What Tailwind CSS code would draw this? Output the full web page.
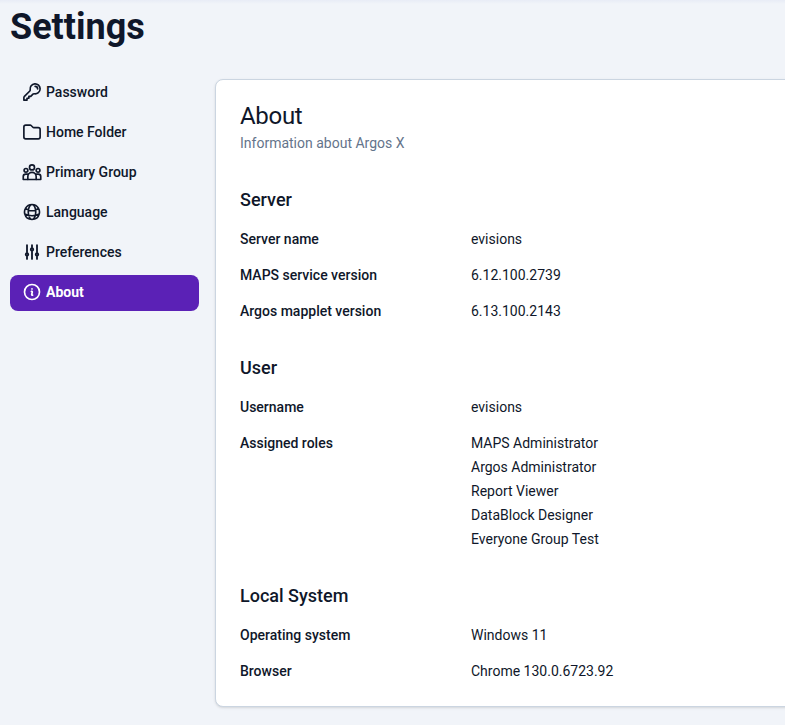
<!DOCTYPE html>
<html lang="en">
<head>
  <meta charset="UTF-8" />
  <title>Settings</title>
  <script src="https://cdn.jsdelivr.net/npm/@tailwindcss/browser@4"></script>
</head>
<body class="h-[725px] overflow-hidden bg-[#f1f4f9] text-[#0f172a] font-['Roboto',sans-serif]">
  <!-- faint shadow from the bar above the page -->
  <div class="absolute top-0 inset-x-0 h-1 bg-linear-to-b from-[#e8ecf6] to-[#f1f4f9]"></div>

  <div class="relative h-[725px] overflow-hidden pl-2.5">
    <h1 class="pt-[7px] h-[75px] text-4xl leading-10 font-bold">Settings</h1>

    <div class="flex gap-4">
      <!-- menu -->
      <nav class="w-[189px] shrink-0 flex flex-col gap-1 text-sm font-medium">
        <a class="h-9 flex items-center gap-1 pl-3 pb-0.5 rounded-lg">
          <svg class="w-5 h-5" fill="none" viewBox="0 0 24 24" stroke="currentColor" stroke-width="2" stroke-linecap="round" stroke-linejoin="round"><path d="M15.75 5.25a3 3 0 0 1 3 3m3 0a6 6 0 0 1-7.029 5.912c-.563-.097-1.159.026-1.563.43L10.5 17.25H8.25v2.25H6v2.25H2.25v-2.818c0-.597.237-1.17.659-1.591l6.499-6.499c.404-.404.527-1 .43-1.563A6 6 0 1 1 21.75 8.25Z"/></svg>
          Password
        </a>
        <a class="h-9 flex items-center gap-1 pl-3 pb-0.5 rounded-lg">
          <svg class="w-5 h-5" fill="none" viewBox="0 0 24 24" stroke="currentColor" stroke-width="2" stroke-linecap="round" stroke-linejoin="round"><path d="M13.06 6.31l-2.12-2.12a1.5 1.5 0 0 0-1.061-.44H4.5A2.25 2.25 0 0 0 2.25 6v12a2.25 2.25 0 0 0 2.25 2.25h15A2.25 2.25 0 0 0 21.75 18V9a2.25 2.25 0 0 0-2.25-2.25h-5.379a1.5 1.5 0 0 1-1.06-.44Z"/></svg>
          Home Folder
        </a>
        <a class="h-9 flex items-center gap-1 pl-3 pb-0.5 rounded-lg">
          <svg class="w-5 h-5" fill="none" viewBox="0 0 24 24" stroke="currentColor" stroke-width="2" stroke-linecap="round" stroke-linejoin="round"><circle cx="12" cy="6.5" r="3"/><circle cx="4.75" cy="10" r="2.25"/><circle cx="19.25" cy="10" r="2.25"/><path d="M7 21v-3.5a5 5 0 0 1 10 0V21"/><path d="M7.6 14.8A3.5 3.5 0 0 0 6 14.5H4.5A3 3 0 0 0 1.5 17.5V21h21v-3.5a3 3 0 0 0-3-3H18a3.5 3.5 0 0 0-1.6.3"/></svg>
          Primary Group
        </a>
        <a class="h-9 flex items-center gap-1 pl-3 pb-0.5 rounded-lg">
          <svg class="w-5 h-5" fill="none" viewBox="0 0 24 24" stroke="currentColor" stroke-width="2" stroke-linecap="round" stroke-linejoin="round"><path d="M12 21a9.004 9.004 0 0 0 8.716-6.747M12 21a9.004 9.004 0 0 1-8.716-6.747M12 21c2.485 0 4.5-4.03 4.5-9S14.485 3 12 3m0 18c-2.485 0-4.5-4.03-4.5-9S9.515 3 12 3m0 0a8.997 8.997 0 0 1 7.843 4.582M12 3a8.997 8.997 0 0 0-7.843 4.582m15.686 0A11.953 11.953 0 0 1 12 10.5c-2.998 0-5.74-1.1-7.843-2.918m15.686 0A8.959 8.959 0 0 1 21 12c0 .778-.099 1.533-.284 2.253m0 0A17.919 17.919 0 0 1 12 16.5c-3.162 0-6.133-.815-8.716-2.247m0 0A9.015 9.015 0 0 1 3 12c0-1.605.42-3.113 1.157-4.418"/></svg>
          Language
        </a>
        <a class="h-9 flex items-center gap-1 pl-3 pb-0.5 rounded-lg">
          <svg class="w-5 h-5" fill="none" viewBox="0 0 24 24" stroke="currentColor" stroke-width="2.2" stroke-linecap="round" stroke-linejoin="round"><path d="M6 13.5V3.75m0 9.75a1.5 1.5 0 0 1 0 3m0-3a1.5 1.5 0 0 0 0 3m0 3.75V16.5m12-3V3.75m0 9.75a1.5 1.5 0 0 1 0 3m0-3a1.5 1.5 0 0 0 0 3m0 3.75V16.5m-6-9V3.75m0 3.75a1.5 1.5 0 0 1 0 3m0-3a1.5 1.5 0 0 0 0 3m0 9.75V10.5"/></svg>
          Preferences
        </a>
        <a class="h-9 flex items-center gap-1 pl-3 pb-0.5 rounded-lg bg-[#5b21b6] text-white font-bold">
          <svg class="w-5 h-5" fill="none" viewBox="0 0 24 24" stroke="currentColor" stroke-width="2" stroke-linecap="round" stroke-linejoin="round"><path d="m11.25 11.25.041-.02a.75.75 0 0 1 1.063.852l-.708 2.836a.75.75 0 0 0 1.063.853l.041-.021M21 12a9 9 0 1 1-18 0 9 9 0 0 1 18 0Zm-9-3.75h.008v.008H12V8.25Z"/></svg>
          About
        </a>
      </nav>

      <!-- about card -->
      <main class="w-[800px] shrink-0 h-[628px] mt-1 px-6 pt-5 bg-white border border-[#cbd5e1] rounded-lg shadow-sm">
        <h2 class="text-2xl leading-8 tracking-[-0.3px]">About</h2>
        <p class="mt-px text-sm leading-5 text-[#64748b]">Information about Argos X</p>

        <h3 class="mt-[33px] text-lg leading-7 font-medium">Server</h3>
        <dl class="mt-[7px] text-sm">
          <div class="flex h-9 items-center">
            <dt class="w-[231px] font-medium">Server name</dt>
            <dd>evisions</dd>
          </div>
          <div class="flex h-9 items-center">
            <dt class="w-[231px] font-medium">MAPS service version</dt>
            <dd>6.12.100.2739</dd>
          </div>
          <div class="flex h-9 items-center">
            <dt class="w-[231px] font-medium">Argos mapplet version</dt>
            <dd>6.13.100.2143</dd>
          </div>
        </dl>

        <h3 class="mt-[25px] text-lg leading-7 font-medium">User</h3>
        <dl class="mt-[7px] text-sm">
          <div class="flex h-9 items-center">
            <dt class="w-[231px] font-medium">Username</dt>
            <dd>evisions</dd>
          </div>
          <div class="flex py-2 leading-6">
            <dt class="w-[231px] font-medium leading-5">Assigned roles</dt>
            <dd class="-mt-0.5">
              <div>MAPS Administrator</div>
              <div>Argos Administrator</div>
              <div>Report Viewer</div>
              <div>DataBlock Designer</div>
              <div>Everyone Group Test</div>
            </dd>
          </div>
        </dl>

        <h3 class="mt-[23px] text-lg leading-7 font-medium">Local System</h3>
        <dl class="mt-[7px] text-sm">
          <div class="flex h-9 items-center">
            <dt class="w-[231px] font-medium">Operating system</dt>
            <dd>Windows 11</dd>
          </div>
          <div class="flex h-9 items-center">
            <dt class="w-[231px] font-medium">Browser</dt>
            <dd>Chrome 130.0.6723.92</dd>
          </div>
        </dl>
      </main>
    </div>
  </div>
</body>
</html>
